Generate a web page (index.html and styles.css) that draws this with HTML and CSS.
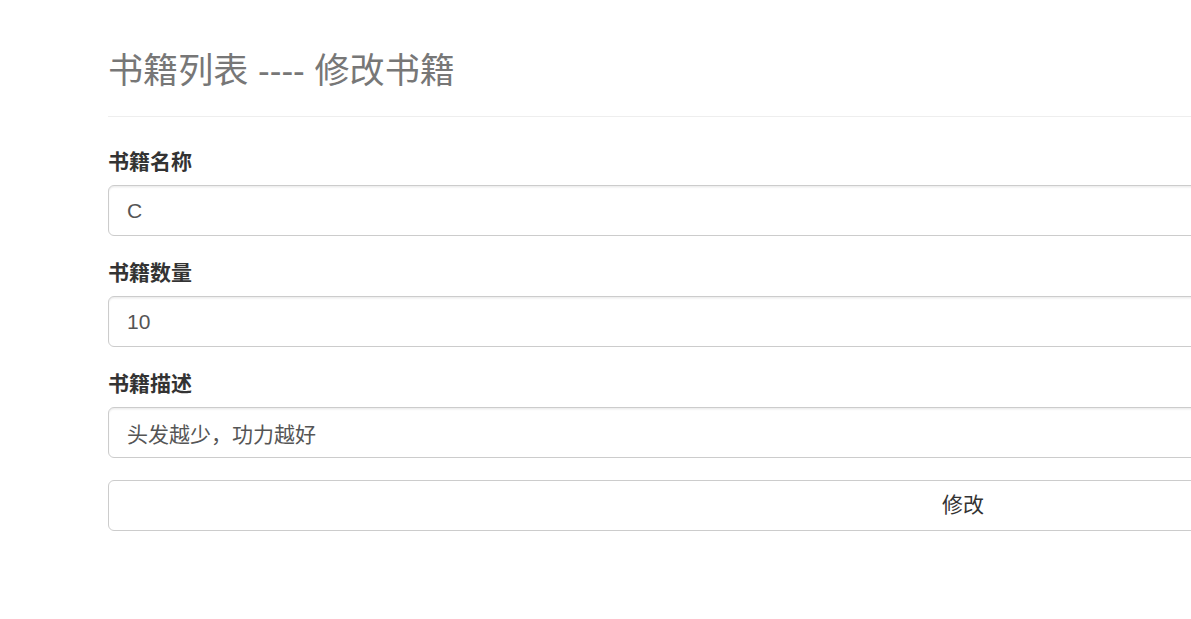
FILE: index.html
```html
<!DOCTYPE html>
<html lang="zh-CN">
<head>
<meta charset="utf-8">
<title>修改书籍</title>
<link rel="stylesheet" href="styles.css">
</head>
<body>
<div class="container">
  <div class="page-header">
    <h1><small>书籍列表 ---- 修改书籍</small></h1>
  </div>
  <form class="form">
    <div class="form-group">
      <label for="name">书籍名称</label>
      <input id="name" class="form-control" type="text" value="C">
    </div>
    <div class="form-group">
      <label for="count">书籍数量</label>
      <input id="count" class="form-control" type="text" value="10">
    </div>
    <div class="form-group">
      <label for="desc">书籍描述</label>
      <input id="desc" class="form-control" type="text" value="头发越少，功力越好">
    </div>
    <button type="button" class="btn">修改</button>
  </form>
</div>
</body>
</html>
```
FILE: styles.css
```css
html, body {
  margin: 0;
  padding: 0;
  overflow: hidden;
  background: #fff;
}
body {
  font-family: "Liberation Sans", Arial, "Noto Sans CJK SC", sans-serif;
  font-size: 21px;
  line-height: 30px;
  color: #333;
}
.container {
  width: 1710px;
  padding-left: 108px;
  padding-top: 35px;
}
.page-header {
  padding-bottom: 13.5px;
  border-bottom: 1px solid #eee;
  margin: 0 0 30px 0;
}
.page-header h1 {
  margin: 0 0 8px 0;
  font-size: 54px;
  line-height: 59.4px;
  font-weight: 500;
}
.page-header h1 small {
  font-size: 35.1px;
  color: #777;
  font-weight: 400;
  line-height: 1;
}
.form-group {
  margin-bottom: 21.5px;
}
.form-group label {
  display: block;
  font-weight: 700;
  margin-bottom: 8.5px;
  line-height: 30px;
}
.form-control {
  display: block;
  box-sizing: border-box;
  width: 100%;
  height: 51px;
  padding: 9px 18px;
  font-family: inherit;
  font-size: 21px;
  line-height: 30px;
  color: #555;
  background: #fff;
  border: 1px solid #ccc;
  border-radius: 6px;
  box-shadow: inset 0 1.5px 1.5px rgba(0,0,0,.075);
  outline: none;
}
.btn {
  display: block;
  box-sizing: border-box;
  width: 100%;
  height: 51px;
  padding: 9px 18px;
  font-family: inherit;
  font-size: 21px;
  line-height: 30px;
  color: #333;
  background: #fff;
  border: 1px solid #ccc;
  border-radius: 6px;
  text-align: center;
  cursor: pointer;
}
```
